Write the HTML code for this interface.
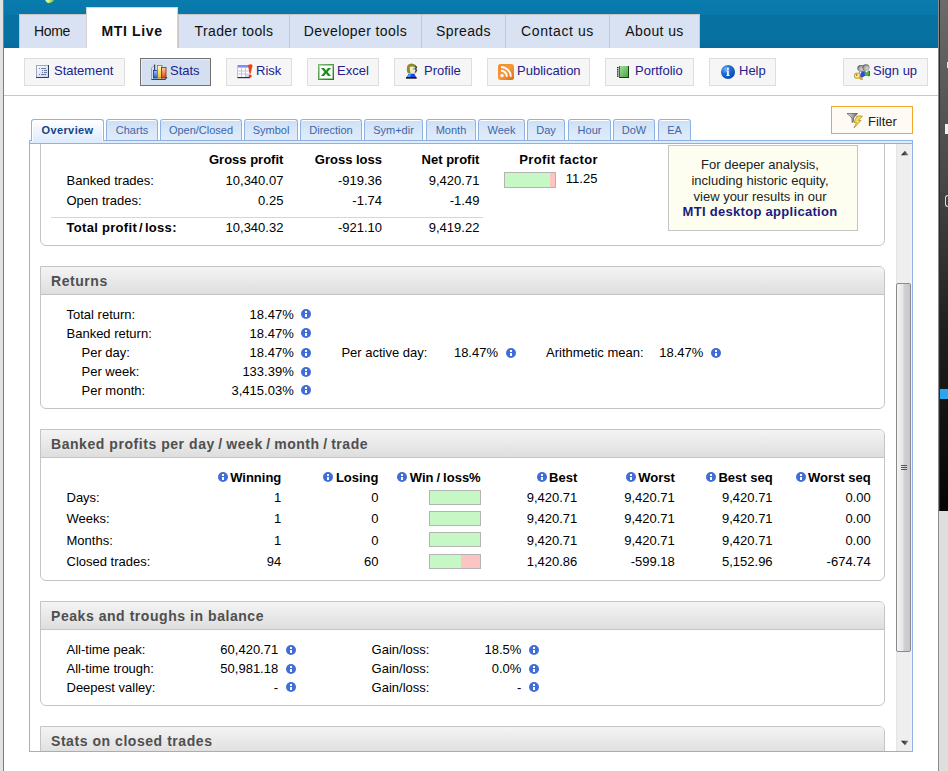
<!DOCTYPE html>
<html><head><meta charset="utf-8">
<style>
*{margin:0;padding:0;box-sizing:border-box}
html,body{width:948px;height:771px;overflow:hidden;background:#fff;font-family:"Liberation Sans",sans-serif;color:#000}
.a{position:absolute}
.t{position:absolute;white-space:nowrap;line-height:16px;font-size:13px}
.r{text-align:right}
.b{font-weight:bold}
/* left strip */
#lstrip{left:0;top:0;width:3px;height:771px;background:#e2e2e2}
#lline{left:3px;top:0;width:1px;height:771px;background:#7d7d7d}
/* header */
#hdr{left:4px;top:0;width:934px;height:48px;background:linear-gradient(#0771a2 80%,#066b9c)}
#hdrtop{left:4px;top:0;width:934px;height:15px;background:linear-gradient(#0a7bad,#0877a9)}
.nt{position:absolute;top:14px;height:34px;background:#d8e2f2;border:1px solid #c9c4c6;border-bottom:none;font-size:14px;line-height:16px;padding-top:8px;letter-spacing:0.4px;text-align:center;color:#111;white-space:nowrap}
.nt.act{top:7px;height:41px;background:#fff;font-weight:bold;padding-top:15px;letter-spacing:0.65px;border-color:#d4d4d4}
/* toolbar */
.btn{position:absolute;top:58px;height:28px;background:#f6f6f6;border:1px solid #dedede;font-size:13px;line-height:16px;color:#22228a;white-space:nowrap}
.btn.sel{background:#d4e0ef;border-color:#727272;box-shadow:inset 1px 1px 0 #e2eefc}
.btn span{position:absolute;top:4px}
.btn svg{position:absolute}
#tbline{left:4px;top:95px;width:934px;height:1px;background:#c8c8c8}
/* right strip */
#rs1{left:938px;top:0;width:1px;height:771px;background:#8a8a8a}
#rs2{left:939px;top:0;width:1px;height:511px;background:#14238c}
#rs3{left:940px;top:0;width:8px;height:511px;background:linear-gradient(#6b6b6b,#474747 35%,#1e1e1e 65%,#050505)}
#rs4{left:939px;top:511px;width:9px;height:260px;background:#dedede}
/* filter */
#filter{left:831px;top:106px;width:82px;height:28px;border:1px solid #f4a628;background:#fffaf4}
/* subtabs */
.st{position:absolute;top:119px;height:22px;border:1px solid #8db2e3;border-bottom:none;border-radius:3px 3px 0 0;background:linear-gradient(#cddff6,#d9e7f9 50%,#e1edfc);font-size:11px;line-height:13px;color:#3d66a6;text-align:center;padding-top:4px;box-shadow:inset 0 1px 0 #fff;white-space:nowrap}
.st.act{letter-spacing:0.4px;height:22px;background:linear-gradient(#fff,#f2f7fe 40%,#deecfd);color:#15428b;font-weight:bold;z-index:3;box-shadow:inset 1px 1px 0 #fff,inset -1px 0 0 #fff}
#strip1{left:29px;top:140px;width:884px;height:1px;background:#8db2e3}
#strip2{left:29px;top:141px;width:884px;height:2px;background:#deecfd}
#strip3{left:29px;top:143px;width:884px;height:1px;background:#8db2e3}
#cont{left:29px;top:140px;width:884px;height:612px;border:1px solid #8db2e3;border-top:none}
#view{left:30px;top:144px;width:882px;height:607px;overflow:hidden}
/* panels */
.pn{position:absolute;left:10px;width:845px;border:1px solid #c4c4c4;border-radius:0 6px 6px 6px;background:#fff}
.ph{position:absolute;left:0;top:0;width:100%;height:28px;background:linear-gradient(#f4f4f4,#dedede);border-bottom:1px solid #c4c4c4;border-radius:0 5px 0 0}
.ph>span{position:absolute;left:10px;top:6px;font-size:14px;font-weight:bold;color:#4f4f4f;white-space:nowrap;line-height:16px;letter-spacing:0.55px}
.sl{margin:0 3.5px}
.ii{position:absolute;width:10px;height:10px}
.bar{position:absolute;width:52px;height:15px;border:1px solid #b4b4b4;background:#c5f8c5}
/* scrollbar */
#sb{left:866px;top:0;width:16px;height:607px;background:linear-gradient(90deg,#e3e3e3,#efefef 2px,#eeeeee 13px,#f2f2f2)}
#thumb{left:866px;top:139px;width:15px;height:369px;border:1px solid #8a8a8a;border-radius:2px;background:linear-gradient(90deg,#f4f4f4,#e6e6e6 45%,#d0d0d4 55%,#c8c8cc)}
</style></head><body>
<div id="lstrip" class="a"></div><div id="lline" class="a"></div>
<div id="hdr" class="a"></div><div id="hdrtop" class="a"></div>
<div class="a" style="left:45px;top:-5px;width:8.5px;height:7.5px;border-radius:50%;transform:rotate(-20deg);background:radial-gradient(circle at 25% 55%,#f0ffd0,#8ed838 55%,#5aa81a)"></div>
<div class="nt" style="left:19px;width:68px;letter-spacing:-0.3px;padding-right:2px">Home</div>
<div class="nt act" style="left:86px;width:92px">MTI Live</div>
<div class="nt" style="left:178px;width:112px">Trader tools</div>
<div class="nt" style="left:289px;width:133px">Developer tools</div>
<div class="nt" style="left:421px;width:85px">Spreads</div>
<div class="nt" style="left:505px;width:105px;letter-spacing:0.6px">Contact us</div>
<div class="nt" style="left:609px;width:91px">About us</div>

<div id="rs1" class="a"></div><div class="a" style="left:947px;top:62px;width:1px;height:6px;background:#e6e6e6;z-index:2"></div><div class="a" style="left:945px;top:124px;width:3px;height:10px;background:#f0f0f0;z-index:2"></div><div class="a" style="left:945px;top:195px;width:3px;height:12px;border:1px solid #d8d8d8;border-right:none;border-radius:3px 0 0 3px;z-index:2"></div><div class="a" style="left:940px;top:389px;width:8px;height:10px;background:#2aa6ee;z-index:2"></div><div id="rs2" class="a"></div><div id="rs3" class="a"></div><div id="rs4" class="a"></div>

<!-- toolbar -->
<div class="btn" style="left:24px;width:101px"><span style="left:29px">Statement</span><svg style="position:absolute;left:11px;top:6px" width="13" height="13" viewBox="0 0 13 13"><defs><linearGradient id="g1" x1="0" y1="0" x2="1" y2="1"><stop offset="0" stop-color="#fbfcff"/><stop offset="1" stop-color="#c9d3f5"/></linearGradient></defs><rect x="0.5" y="0.5" width="12" height="12" fill="url(#g1)" stroke="#9aa8c4"/><path d="M0 12.5H12.5V0" stroke="#2d3f5e" fill="none"/><g fill="#6f7fa3"><rect x="3" y="3" width="1" height="1"/><rect x="5" y="3" width="5" height="1"/><rect x="6" y="5" width="1" height="1"/><rect x="8" y="5" width="3" height="1"/><rect x="6" y="7" width="1" height="1"/><rect x="8" y="7" width="3" height="1"/><rect x="3" y="9" width="1" height="1"/><rect x="5" y="9" width="5" height="1"/></g></svg></div>
<div class="btn sel" style="left:140px;width:71px"><span style="left:29px">Stats</span><svg style="position:absolute;left:10px;top:5px" width="17" height="17" viewBox="0 0 17 17"><defs><linearGradient id="gb" x1="0" y1="0" x2="0" y2="1"><stop offset="0" stop-color="#9cc4ff"/><stop offset="1" stop-color="#1f5fe0"/></linearGradient><linearGradient id="gy" x1="0" y1="0" x2="0" y2="1"><stop offset="0" stop-color="#fffbd0"/><stop offset="1" stop-color="#f2c400"/></linearGradient><linearGradient id="gr" x1="0" y1="0" x2="0" y2="1"><stop offset="0" stop-color="#ffc8b0"/><stop offset="1" stop-color="#e84010"/></linearGradient></defs><path d="M0.5 16V4L3.5 1" stroke="#9aa6b4" fill="none"/><rect x="3" y="0.5" width="1.2" height="6" fill="#33475e"/><rect x="2.5" y="6.5" width="4" height="7.5" fill="url(#gb)" stroke="#1a2c80" stroke-width="0.8"/><rect x="6.5" y="1.5" width="4.5" height="12.5" fill="url(#gy)" stroke="#8a7a20" stroke-width="0.8"/><rect x="10.5" y="3.5" width="4.5" height="10.5" fill="url(#gr)" stroke="#7a2a10" stroke-width="0.8"/><path d="M0.5 15.5H14L16 13" stroke="#2f4660" stroke-width="1.2" fill="none"/></svg></div>
<div class="btn" style="left:226px;width:66px"><span style="left:29px">Risk</span><svg style="position:absolute;left:10px;top:5px" width="17" height="15" viewBox="0 0 17 15"><rect x="0" y="1" width="13" height="13" fill="#fff"/><rect x="0" y="1" width="13" height="2.6" fill="#7c8cf8"/><g fill="#c4c4d8"><rect x="0" y="1" width="1" height="13"/><rect x="4" y="3.5" width="1" height="10"/><rect x="8" y="3.5" width="1" height="10"/><rect x="0" y="6.5" width="13" height="1"/><rect x="0" y="9.5" width="13" height="1"/></g><rect x="9" y="10" width="3" height="3" fill="#d4d4fa"/><rect x="0.5" y="13" width="12.5" height="1.2" fill="#2a2a6a"/><path d="M11 1.2Q13.6 -0.6 15.6 1.2L13.6 9.8H12.6Z" fill="#f04010"/><circle cx="13.2" cy="12" r="1.5" fill="#e83a0c"/></svg></div>
<div class="btn" style="left:307px;width:72px"><span style="left:29px">Excel</span><svg style="position:absolute;left:10px;top:5px" width="16" height="16" viewBox="0 0 16 16"><defs><linearGradient id="ge" x1="0" y1="0" x2="1" y2="1"><stop offset="0" stop-color="#7cc070"/><stop offset="1" stop-color="#2a6a22"/></linearGradient></defs><rect x="0" y="0" width="16" height="16" fill="url(#ge)"/><rect x="2" y="2" width="12" height="12" fill="#f8fff8"/><rect x="1.5" y="1.5" width="13" height="13" fill="none" stroke="#b8e0b0" stroke-width="0.8"/><path d="M3 4H6L8 6.5L10 4H13L9.6 8L13 12H10L8 9.5L6 12H3L6.4 8Z" fill="#1f8a22"/></svg></div>
<div class="btn" style="left:394px;width:78px"><span style="left:29px">Profile</span><svg style="position:absolute;left:11px;top:4px" width="12" height="16" viewBox="0 0 13 17"><path d="M1 5Q1 1 6 0.5Q11 1 11.5 4.5L11 11H2Q0.5 8 1 5Z" fill="#8e8a2a"/><path d="M4 4Q8 3 10 5V11H5Q3.5 8 4 4Z" fill="#ecebc4"/><path d="M10 3L11.5 4L10.5 6L11.5 8L10 10" stroke="#111" stroke-width="1" fill="none"/><rect x="8" y="5.5" width="1.5" height="1.5" fill="#3a78ff"/><path d="M0 16L3 11.5H9L11.5 16Z" fill="#1f3cf0"/><path d="M1 15L3.5 12H6L4 15Z" fill="#20b8ff"/><rect x="0" y="15.2" width="11.5" height="1.6" fill="#0a0a0a"/></svg></div>
<div class="btn" style="left:487px;width:103px"><span style="left:29px">Publication</span><svg style="position:absolute;left:10px;top:5px" width="16" height="16" viewBox="0 0 16 16"><defs><linearGradient id="go" x1="0" y1="0" x2="1" y2="1"><stop offset="0" stop-color="#f08a30"/><stop offset="0.5" stop-color="#f59a3a"/><stop offset="1" stop-color="#e06a18"/></linearGradient></defs><rect x="0" y="0" width="16" height="16" rx="2.5" fill="url(#go)"/><circle cx="4" cy="11.6" r="1.7" fill="#fff"/><path d="M3 6.8A5.6 5.6 0 0 1 8.8 12.8" stroke="#fff" stroke-width="1.9" fill="none"/><path d="M3 3A9.6 9.6 0 0 1 12.8 12.8" stroke="#fff" stroke-width="1.9" fill="none"/></svg></div>
<div class="btn" style="left:605px;width:89px"><span style="left:29px">Portfolio</span><svg style="position:absolute;left:11px;top:7px" width="12" height="12" viewBox="0 0 12 12"><defs><linearGradient id="gp" x1="0" y1="0" x2="1" y2="1"><stop offset="0" stop-color="#a6e0a0"/><stop offset="1" stop-color="#4aa848"/></linearGradient></defs><rect x="2" y="0" width="10" height="12" fill="#1a3a1a"/><rect x="2" y="0" width="9" height="11" fill="url(#gp)"/><rect x="2" y="0" width="1" height="11.5" fill="#2a7a2a"/><g fill="#111"><rect x="0" y="1" width="1.5" height="1.3"/><rect x="0" y="3.2" width="1.5" height="1.3"/><rect x="0" y="5.3" width="1.5" height="1.3"/><rect x="0" y="7.4" width="1.5" height="1.3"/><rect x="0" y="9.5" width="1.5" height="1.3"/></g></svg></div>
<div class="btn" style="left:709px;width:67px"><span style="left:29px">Help</span><svg style="position:absolute;left:11px;top:6px" width="14" height="14" viewBox="0 0 14 14"><defs><radialGradient id="gh" cx="0.35" cy="0.3" r="0.75"><stop offset="0" stop-color="#7ab4ff"/><stop offset="0.45" stop-color="#1e6fd8"/><stop offset="1" stop-color="#0a45a8"/></radialGradient></defs><circle cx="7" cy="7" r="7" fill="url(#gh)"/><rect x="6" y="2.8" width="1.8" height="1.8" fill="#fff"/><path d="M5.2 5.4H7.8V10.2H8.8V11.1H5.2V10.2H6.1V6.3H5.2Z" fill="#fff"/></svg></div>
<div class="btn" style="left:843px;width:85px"><span style="left:29px">Sign up</span><svg style="position:absolute;left:10px;top:5px" width="16" height="16" viewBox="0 0 16 16"><defs><radialGradient id="gsh" cx="0.6" cy="0.6" r="0.6"><stop offset="0" stop-color="#d8d8d8"/><stop offset="0.6" stop-color="#a8a8a8"/><stop offset="1" stop-color="#5a5a5a"/></radialGradient></defs><ellipse cx="7" cy="4.3" rx="3.6" ry="3.3" fill="url(#gsh)"/><ellipse cx="12" cy="3.6" rx="3.6" ry="3.4" fill="url(#gsh)"/><path d="M9.8 6.8H15.8V11.4L14.5 12H10.2Z" fill="#52b040"/><path d="M15.8 7V11.4L14.5 12" stroke="#1a3a1a" stroke-width="0.8" fill="none"/><path d="M11 6.8L12.6 8.4L14.2 6.8Z" fill="#fff"/><path d="M5.2 7.2H10.4L11 11.8L8.4 13.4H6Z" fill="#2a4ae6"/><path d="M5.6 7.6H7.6L6.4 11Z" fill="#e6ecff"/><rect x="0.5" y="9.2" width="5.6" height="5" rx="1.6" fill="#f7e785" stroke="#a88a1a" stroke-width="0.8"/><circle cx="2.6" cy="11" r="0.7" fill="#6a5010"/><path d="M5 13.2L8.6 15.8" stroke="#d2aa22" stroke-width="2.2"/></svg></div>
<div id="tbline" class="a"></div>

<div id="filter" class="a"><span class="t" style="left:36px;top:7px;color:#222">Filter</span><svg style="position:absolute;left:15px;top:6px" width="17" height="16" viewBox="0 0 17 16"><defs><linearGradient id="gf" x1="0" y1="0" x2="1" y2="0"><stop offset="0" stop-color="#f4f4f4"/><stop offset="1" stop-color="#606060"/></linearGradient></defs><path d="M0 0.5H10.5L6.5 5V8.5L5 9.5V5Z" fill="url(#gf)" stroke="#555" stroke-width="0.7"/><path d="M10 3H15.5L11.5 7.5H14L7 15L9.5 9.5H7Z" fill="#f8dc48" stroke="#a0862a" stroke-width="0.7"/></svg></div>

<!-- subtabs -->
<div class="st act" style="left:31px;width:73px">Overview</div>
<div class="st" style="left:106px;width:52px">Charts</div>
<div class="st" style="left:160px;width:82px">Open/Closed</div>
<div class="st" style="left:244px;width:54px">Symbol</div>
<div class="st" style="left:300px;width:62px">Direction</div>
<div class="st" style="left:364px;width:59px">Sym+dir</div>
<div class="st" style="left:426px;width:50px">Month</div>
<div class="st" style="left:478px;width:47px">Week</div>
<div class="st" style="left:527px;width:38px">Day</div>
<div class="st" style="left:568px;width:43px">Hour</div>
<div class="st" style="left:613px;width:42px">DoW</div>
<div class="st" style="left:658px;width:33px">EA</div>
<div id="strip1" class="a"></div><div id="strip2" class="a"></div><div id="strip3" class="a"></div>
<div id="cont" class="a"></div>
<div id="view" class="a">
<!--CONTENT-->
<div class="pn" style="top:-60px;height:162px"></div>
<div class="t b" style="top:8.00px;left:-146.60px;width:400px;text-align:right;">Gross profit</div>
<div class="t b" style="top:8.00px;left:-48.00px;width:400px;text-align:right;">Gross loss</div>
<div class="t b" style="top:8.00px;left:49.40px;width:400px;text-align:right;">Net profit</div>
<div class="t b" style="top:8.00px;left:489.20px;letter-spacing:0.4px;">Profit factor</div>
<div class="t " style="top:29.00px;left:36.50px;">Banked trades:</div>
<div class="t " style="top:29.00px;left:-146.60px;width:400px;text-align:right;">10,340.07</div>
<div class="t " style="top:29.00px;left:-48.00px;width:400px;text-align:right;">-919.36</div>
<div class="t " style="top:29.00px;left:49.40px;width:400px;text-align:right;">9,420.71</div>
<div class="bar" style="left:474px;top:28px;width:52px;height:16px"><div class="a" style="right:0;top:0;width:5px;height:100%;background:#fdc4c4"></div></div>
<div class="t " style="top:26.90px;left:167.40px;width:400px;text-align:right;">11.25</div>
<div class="t " style="top:48.80px;left:36.50px;">Open trades:</div>
<div class="t " style="top:48.80px;left:-146.60px;width:400px;text-align:right;">0.25</div>
<div class="t " style="top:48.80px;left:-48.00px;width:400px;text-align:right;">-1.74</div>
<div class="t " style="top:48.80px;left:49.40px;width:400px;text-align:right;">-1.49</div>
<div class="a" style="left:21px;top:73px;width:432px;height:1px;background:#d6d6d6"></div>
<div class="t b" style="top:75.80px;left:36.50px;letter-spacing:0.3px;">Total profit<span style="margin:0 2px">/</span>loss:</div>
<div class="t " style="top:75.80px;left:-146.60px;width:400px;text-align:right;">10,340.32</div>
<div class="t " style="top:75.80px;left:-48.00px;width:400px;text-align:right;">-921.10</div>
<div class="t " style="top:75.80px;left:49.40px;width:400px;text-align:right;">9,419.22</div>
<div class="a" style="left:638px;top:1px;width:190px;height:86px;background:#fefef0;border:1px solid #c5c5c5"></div>
<div class="t " style="top:12.70px;left:530.00px;color:#222;width:400px;text-align:center;">For deeper analysis,</div>
<div class="t " style="top:28.50px;left:530.00px;color:#222;width:400px;text-align:center;">including historic equity,</div>
<div class="t " style="top:44.50px;left:530.00px;color:#222;width:400px;text-align:center;">view your results in our</div>
<div class="t b" style="top:59.90px;left:530.00px;color:#1a1a7e;width:400px;text-align:center;letter-spacing:0.3px;">MTI desktop application</div>
<div class="pn" style="top:122px;height:143px"><div class="ph"><span>Returns</span></div></div>
<div class="t " style="top:162.70px;left:36.50px;">Total return:</div>
<div class="t " style="top:162.70px;left:-136.30px;width:400px;text-align:right;">18.47%</div>
<svg class="ii" style="left:271px;top:165.2px" viewBox="0 0 10 10"><circle cx="5" cy="5" r="5" fill="#416ed6"/><rect x="4" y="2" width="2" height="2" fill="#fff"/><rect x="4" y="5" width="2" height="3" fill="#fff"/></svg>
<div class="t " style="top:181.90px;left:36.50px;">Banked return:</div>
<div class="t " style="top:181.90px;left:-136.30px;width:400px;text-align:right;">18.47%</div>
<svg class="ii" style="left:271px;top:184.39999999999998px" viewBox="0 0 10 10"><circle cx="5" cy="5" r="5" fill="#416ed6"/><rect x="4" y="2" width="2" height="2" fill="#fff"/><rect x="4" y="5" width="2" height="3" fill="#fff"/></svg>
<div class="t " style="top:201.10px;left:51.50px;">Per day:</div>
<div class="t " style="top:201.10px;left:-136.30px;width:400px;text-align:right;">18.47%</div>
<svg class="ii" style="left:271px;top:203.60000000000002px" viewBox="0 0 10 10"><circle cx="5" cy="5" r="5" fill="#416ed6"/><rect x="4" y="2" width="2" height="2" fill="#fff"/><rect x="4" y="5" width="2" height="3" fill="#fff"/></svg>
<div class="t " style="top:220.00px;left:51.50px;">Per week:</div>
<div class="t " style="top:220.00px;left:-136.30px;width:400px;text-align:right;">133.39%</div>
<svg class="ii" style="left:271px;top:222.5px" viewBox="0 0 10 10"><circle cx="5" cy="5" r="5" fill="#416ed6"/><rect x="4" y="2" width="2" height="2" fill="#fff"/><rect x="4" y="5" width="2" height="3" fill="#fff"/></svg>
<div class="t " style="top:238.70px;left:51.50px;">Per month:</div>
<div class="t " style="top:238.70px;left:-136.30px;width:400px;text-align:right;">3,415.03%</div>
<svg class="ii" style="left:271px;top:241.2px" viewBox="0 0 10 10"><circle cx="5" cy="5" r="5" fill="#416ed6"/><rect x="4" y="2" width="2" height="2" fill="#fff"/><rect x="4" y="5" width="2" height="3" fill="#fff"/></svg>
<div class="t " style="top:201.10px;left:311.40px;">Per active day:</div>
<div class="t " style="top:201.10px;left:68.00px;width:400px;text-align:right;">18.47%</div>
<svg class="ii" style="left:476px;top:203.60000000000002px" viewBox="0 0 10 10"><circle cx="5" cy="5" r="5" fill="#416ed6"/><rect x="4" y="2" width="2" height="2" fill="#fff"/><rect x="4" y="5" width="2" height="3" fill="#fff"/></svg>
<div class="t " style="top:201.10px;left:516.00px;">Arithmetic mean:</div>
<div class="t " style="top:201.10px;left:273.40px;width:400px;text-align:right;">18.47%</div>
<svg class="ii" style="left:681px;top:203.60000000000002px" viewBox="0 0 10 10"><circle cx="5" cy="5" r="5" fill="#416ed6"/><rect x="4" y="2" width="2" height="2" fill="#fff"/><rect x="4" y="5" width="2" height="3" fill="#fff"/></svg>
<div class="pn" style="top:285px;height:152px"><div class="ph"><span>Banked profits per day<span class="sl">/</span>week<span class="sl">/</span>month<span class="sl">/</span>trade</span></div></div>
<div class="t b" style="top:325.90px;left:-148.70px;width:400px;text-align:right;"><svg width="10" height="10" viewBox="0 0 10 10" style="vertical-align:baseline;margin-right:2.5px"><circle cx="5" cy="5" r="5" fill="#416ed6"/><rect x="4" y="2" width="2" height="2" fill="#fff"/><rect x="4" y="5" width="2" height="3" fill="#fff"/></svg>Winning</div>
<div class="t b" style="top:325.90px;left:-51.50px;width:400px;text-align:right;"><svg width="10" height="10" viewBox="0 0 10 10" style="vertical-align:baseline;margin-right:2.5px"><circle cx="5" cy="5" r="5" fill="#416ed6"/><rect x="4" y="2" width="2" height="2" fill="#fff"/><rect x="4" y="5" width="2" height="3" fill="#fff"/></svg>Losing</div>
<div class="t b" style="top:325.90px;left:50.70px;width:400px;text-align:right;"><svg width="10" height="10" viewBox="0 0 10 10" style="vertical-align:baseline;margin-right:2.5px"><circle cx="5" cy="5" r="5" fill="#416ed6"/><rect x="4" y="2" width="2" height="2" fill="#fff"/><rect x="4" y="5" width="2" height="3" fill="#fff"/></svg>Win<span style="margin:0 3px">/</span>loss%</div>
<div class="t b" style="top:325.90px;left:147.30px;width:400px;text-align:right;"><svg width="10" height="10" viewBox="0 0 10 10" style="vertical-align:baseline;margin-right:2.5px"><circle cx="5" cy="5" r="5" fill="#416ed6"/><rect x="4" y="2" width="2" height="2" fill="#fff"/><rect x="4" y="5" width="2" height="3" fill="#fff"/></svg>Best</div>
<div class="t b" style="top:325.90px;left:244.80px;width:400px;text-align:right;"><svg width="10" height="10" viewBox="0 0 10 10" style="vertical-align:baseline;margin-right:2.5px"><circle cx="5" cy="5" r="5" fill="#416ed6"/><rect x="4" y="2" width="2" height="2" fill="#fff"/><rect x="4" y="5" width="2" height="3" fill="#fff"/></svg>Worst</div>
<div class="t b" style="top:325.90px;left:342.60px;width:400px;text-align:right;"><svg width="10" height="10" viewBox="0 0 10 10" style="vertical-align:baseline;margin-right:2.5px"><circle cx="5" cy="5" r="5" fill="#416ed6"/><rect x="4" y="2" width="2" height="2" fill="#fff"/><rect x="4" y="5" width="2" height="3" fill="#fff"/></svg>Best seq</div>
<div class="t b" style="top:325.90px;left:440.70px;width:400px;text-align:right;"><svg width="10" height="10" viewBox="0 0 10 10" style="vertical-align:baseline;margin-right:2.5px"><circle cx="5" cy="5" r="5" fill="#416ed6"/><rect x="4" y="2" width="2" height="2" fill="#fff"/><rect x="4" y="5" width="2" height="3" fill="#fff"/></svg>Worst seq</div>
<div class="t " style="top:345.70px;left:36.50px;">Days:</div>
<div class="t " style="top:345.70px;left:-148.70px;width:400px;text-align:right;">1</div>
<div class="t " style="top:345.70px;left:-51.50px;width:400px;text-align:right;">0</div>
<div class="bar" style="left:399px;top:346px;width:52px;height:15px"></div>
<div class="t " style="top:345.70px;left:147.30px;width:400px;text-align:right;">9,420.71</div>
<div class="t " style="top:345.70px;left:244.80px;width:400px;text-align:right;">9,420.71</div>
<div class="t " style="top:345.70px;left:342.60px;width:400px;text-align:right;">9,420.71</div>
<div class="t " style="top:345.70px;left:440.70px;width:400px;text-align:right;">0.00</div>
<div class="t " style="top:366.80px;left:36.50px;">Weeks:</div>
<div class="t " style="top:366.80px;left:-148.70px;width:400px;text-align:right;">1</div>
<div class="t " style="top:366.80px;left:-51.50px;width:400px;text-align:right;">0</div>
<div class="bar" style="left:399px;top:367px;width:52px;height:15px"></div>
<div class="t " style="top:366.80px;left:147.30px;width:400px;text-align:right;">9,420.71</div>
<div class="t " style="top:366.80px;left:244.80px;width:400px;text-align:right;">9,420.71</div>
<div class="t " style="top:366.80px;left:342.60px;width:400px;text-align:right;">9,420.71</div>
<div class="t " style="top:366.80px;left:440.70px;width:400px;text-align:right;">0.00</div>
<div class="t " style="top:389.00px;left:36.50px;">Months:</div>
<div class="t " style="top:389.00px;left:-148.70px;width:400px;text-align:right;">1</div>
<div class="t " style="top:389.00px;left:-51.50px;width:400px;text-align:right;">0</div>
<div class="bar" style="left:399px;top:388px;width:52px;height:15px"></div>
<div class="t " style="top:389.00px;left:147.30px;width:400px;text-align:right;">9,420.71</div>
<div class="t " style="top:389.00px;left:244.80px;width:400px;text-align:right;">9,420.71</div>
<div class="t " style="top:389.00px;left:342.60px;width:400px;text-align:right;">9,420.71</div>
<div class="t " style="top:389.00px;left:440.70px;width:400px;text-align:right;">0.00</div>
<div class="t " style="top:409.50px;left:36.50px;">Closed trades:</div>
<div class="t " style="top:409.50px;left:-148.70px;width:400px;text-align:right;">94</div>
<div class="t " style="top:409.50px;left:-51.50px;width:400px;text-align:right;">60</div>
<div class="bar" style="left:399px;top:410px;width:52px;height:15px"><div class="a" style="right:0;top:0;width:19px;height:100%;background:#fdc4c4"></div></div>
<div class="t " style="top:409.50px;left:147.30px;width:400px;text-align:right;">1,420.86</div>
<div class="t " style="top:409.50px;left:244.80px;width:400px;text-align:right;">-599.18</div>
<div class="t " style="top:409.50px;left:342.60px;width:400px;text-align:right;">5,152.96</div>
<div class="t " style="top:409.50px;left:440.70px;width:400px;text-align:right;">-674.74</div>
<div class="pn" style="top:457px;height:105px"><div class="ph"><span>Peaks and troughs in balance</span></div></div>
<div class="t " style="top:498.10px;left:36.50px;">All-time peak:</div>
<div class="t " style="top:498.10px;left:-151.80px;width:400px;text-align:right;">60,420.71</div>
<svg class="ii" style="left:256.4px;top:500.6px" viewBox="0 0 10 10"><circle cx="5" cy="5" r="5" fill="#416ed6"/><rect x="4" y="2" width="2" height="2" fill="#fff"/><rect x="4" y="5" width="2" height="3" fill="#fff"/></svg>
<div class="t " style="top:498.10px;left:341.60px;">Gain/loss:</div>
<div class="t " style="top:498.10px;left:91.40px;width:400px;text-align:right;">18.5%</div>
<svg class="ii" style="left:499px;top:500.6px" viewBox="0 0 10 10"><circle cx="5" cy="5" r="5" fill="#416ed6"/><rect x="4" y="2" width="2" height="2" fill="#fff"/><rect x="4" y="5" width="2" height="3" fill="#fff"/></svg>
<div class="t " style="top:517.10px;left:36.50px;">All-time trough:</div>
<div class="t " style="top:517.10px;left:-151.80px;width:400px;text-align:right;">50,981.18</div>
<svg class="ii" style="left:256.4px;top:519.6px" viewBox="0 0 10 10"><circle cx="5" cy="5" r="5" fill="#416ed6"/><rect x="4" y="2" width="2" height="2" fill="#fff"/><rect x="4" y="5" width="2" height="3" fill="#fff"/></svg>
<div class="t " style="top:517.10px;left:341.60px;">Gain/loss:</div>
<div class="t " style="top:517.10px;left:91.40px;width:400px;text-align:right;">0.0%</div>
<svg class="ii" style="left:499px;top:519.6px" viewBox="0 0 10 10"><circle cx="5" cy="5" r="5" fill="#416ed6"/><rect x="4" y="2" width="2" height="2" fill="#fff"/><rect x="4" y="5" width="2" height="3" fill="#fff"/></svg>
<div class="t " style="top:535.90px;left:36.50px;">Deepest valley:</div>
<div class="t " style="top:535.90px;left:-151.80px;width:400px;text-align:right;">-</div>
<svg class="ii" style="left:256.4px;top:538.4px" viewBox="0 0 10 10"><circle cx="5" cy="5" r="5" fill="#416ed6"/><rect x="4" y="2" width="2" height="2" fill="#fff"/><rect x="4" y="5" width="2" height="3" fill="#fff"/></svg>
<div class="t " style="top:535.90px;left:341.60px;">Gain/loss:</div>
<div class="t " style="top:535.90px;left:91.40px;width:400px;text-align:right;">-</div>
<svg class="ii" style="left:499px;top:538.4px" viewBox="0 0 10 10"><circle cx="5" cy="5" r="5" fill="#416ed6"/><rect x="4" y="2" width="2" height="2" fill="#fff"/><rect x="4" y="5" width="2" height="3" fill="#fff"/></svg>
<div class="pn" style="top:582px;height:175px"><div class="ph"><span>Stats on closed trades</span></div></div>
<div id="sb" class="a"></div>
<div id="thumb" class="a"><div class="a" style="left:4px;top:181px;width:6px;height:1px;background:#555"></div><div class="a" style="left:4px;top:183px;width:6px;height:1px;background:#555"></div><div class="a" style="left:4px;top:185px;width:6px;height:1px;background:#555"></div></div>
<svg class="a" style="left:871px;top:6px" width="8" height="6" viewBox="0 0 8 6"><defs><linearGradient id="ga" x1="0" y1="0" x2="1" y2="0"><stop offset="0" stop-color="#111"/><stop offset="1" stop-color="#888"/></linearGradient></defs><path d="M0 5.2L4 0.8L7.5 5.2Z" fill="url(#ga)"/></svg>
<svg class="a" style="left:871px;top:596px" width="8" height="6" viewBox="0 0 8 6"><path d="M0 0.8L4 5.2L7.5 0.8Z" fill="url(#ga)"/></svg>
<!--/CONTENT-->
</div>
</body></html>
